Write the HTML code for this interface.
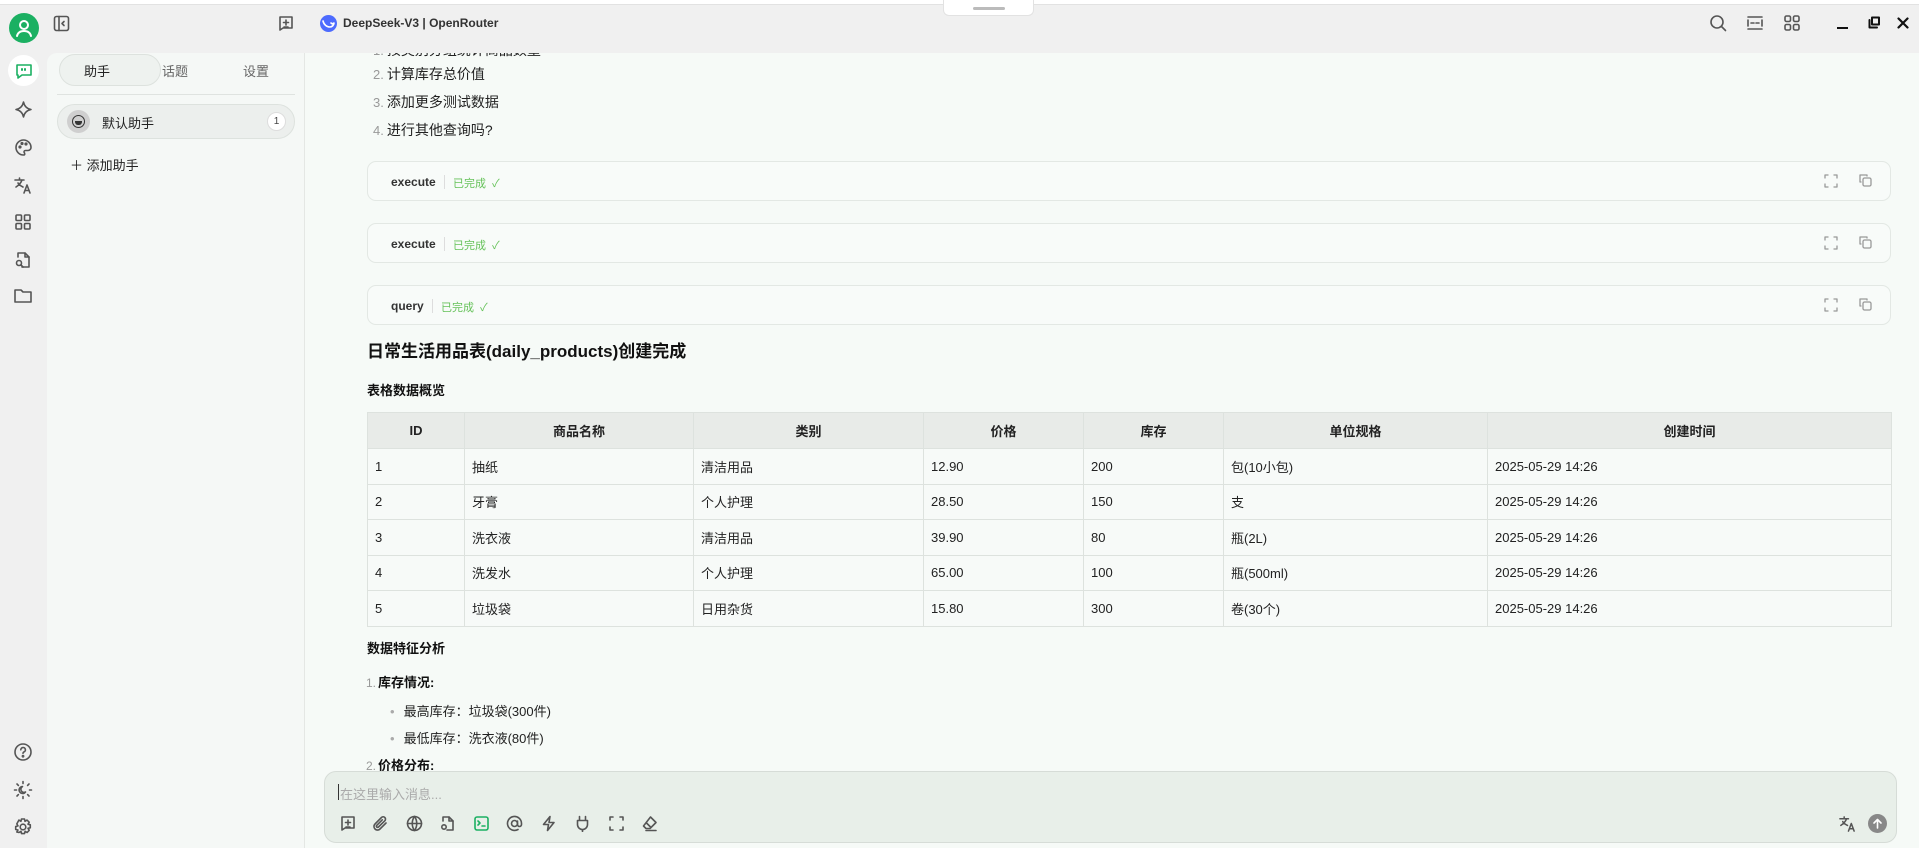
<!DOCTYPE html>
<html><head><meta charset="utf-8">
<style>
*{box-sizing:border-box;margin:0;padding:0}
body{width:1919px;height:848px;overflow:hidden;background:#f0f0f0;font-family:"Liberation Sans","Noto Sans CJK SC",sans-serif;color:#222;position:relative}
.abs{position:absolute}
svg{position:absolute;fill:none;stroke:#555;stroke-width:1.6;stroke-linecap:round;stroke-linejoin:round}
.side{left:47px;top:53px;width:258px;height:795px;background:#f5f8f6;border-top-left-radius:10px;border-right:1px solid #e4e7e4}
.main{left:305px;top:53px;width:1614px;height:795px;background:#f6faf7;overflow:hidden}
.li{position:absolute;left:373px;font-size:14px;color:#222}
.li b{color:#999;font-weight:normal;margin-right:3px;font-size:13px}
.card{position:absolute;left:367px;width:1524px;height:40px;border:1px solid #e3e8e4;border-radius:9px;background:#f8fbf9}
.card .n{position:absolute;left:23px;top:13px;font-size:12px;font-weight:bold;color:#333;padding-right:8px;border-right:1px solid #ddd}
.card .s{position:absolute;top:13px;font-size:11px;color:#66c25a}
table{position:absolute;left:367px;top:412px;border-collapse:collapse;font-size:13px}
td,th{border:1px solid #dde2de;padding:0 7px;height:35.5px;text-align:left;font-weight:normal;color:#222}
th{background:#e8ebe8;text-align:center;font-weight:bold;height:36px}
td{background:#f7faf8}
</style></head><body>
<div class="abs" style="left:0;top:0;width:1919px;height:5px;background:#fff;border-bottom:1px solid #e2e2e2"></div>
<div class="abs" style="left:943px;top:0;width:91px;height:16px;background:#fff;border:1px solid #e2e2e2;border-top:none;border-radius:0 0 6px 6px"></div>
<div class="abs" style="left:973px;top:7px;width:32px;height:3px;background:#bbb;border-radius:2px"></div>

<!-- rail -->
<div class="abs" style="left:9px;top:13px;width:30px;height:30px;border-radius:50%;background:#1bb062"></div>
<svg style="left:14px;top:17px" width="20" height="22" viewBox="0 0 20 22"><circle cx="10" cy="8" r="4" stroke="#fff" stroke-width="2"/><path d="M3 19c1-4 4-5 7-5s6 1 7 5" stroke="#fff" stroke-width="2"/></svg>
<div class="abs" style="left:8px;top:55px;width:31px;height:31px;border-radius:50%;background:#fff"></div>
<svg style="left:15px;top:62px" width="18" height="18" viewBox="0 0 18 18"><path d="M2 3h14v10H7l-4 3v-3H2z" stroke="#1bb062"/><path d="M7 7v1M10 7v1" stroke="#1bb062" stroke-width="2"/></svg>
<svg style="left:14px;top:100px" width="19" height="19" viewBox="0 0 19 19"><path d="M9.5 2c.8 4 3.5 6.7 7.5 7.5-4 .8-6.7 3.5-7.5 7.5-.8-4-3.5-6.7-7.5-7.5 4-.8 6.7-3.5 7.5-7.5z"/></svg>
<svg style="left:14px;top:138px" width="19" height="19" viewBox="0 0 19 19"><path d="M9.5 2a7.5 7.5 0 0 0 0 15c1.5 0 1.5-1.5.8-2.3-.8-1 0-2.2 1.2-2.2H14a3 3 0 0 0 3-3A7.5 7.5 0 0 0 9.5 2z"/><circle cx="6" cy="9" r=".8"/><circle cx="8" cy="5.5" r=".8"/><circle cx="12" cy="6" r=".8"/></svg>
<svg style="left:13px;top:175px" width="20" height="20" viewBox="0 0 20 20"><path d="M2 5h9M6.5 3v2M3 12c3-2 5-4 6-7M5 8c1 2 3 3 5 4M11 18l3-8 3 8M12 15.5h4"/></svg>
<svg style="left:14px;top:213px" width="18" height="18" viewBox="0 0 18 18"><rect x="2" y="2" width="5.5" height="5.5" rx="1"/><rect x="10.5" y="2" width="5.5" height="5.5" rx="1"/><rect x="2" y="10.5" width="5.5" height="5.5" rx="1"/><rect x="10.5" y="10.5" width="5.5" height="5.5" rx="1"/></svg>
<svg style="left:14px;top:250px" width="18" height="19" viewBox="0 0 18 19"><path d="M4 7V3h7l4 4v10H8"/><path d="M11 3v4h4"/><circle cx="5" cy="13" r="2.5"/><path d="M7 15l2 2"/></svg>
<svg style="left:13px;top:287px" width="20" height="18" viewBox="0 0 20 18"><path d="M2 3h6l2 2h8v10H2z"/></svg>
<svg style="left:13px;top:742px" width="20" height="20" viewBox="0 0 20 20"><circle cx="10" cy="10" r="8"/><path d="M7.8 7.8a2.3 2.3 0 1 1 3 2.2c-.6.3-.8.7-.8 1.3"/><circle cx="10" cy="14.2" r=".6"/></svg>
<svg style="left:13px;top:780px" width="20" height="20" viewBox="0 0 20 20"><path d="M10 1.5v2M10 16.5v2M1.5 10h2M16.5 10h2M4 4l1.4 1.4M14.6 14.6L16 16M4 16l1.4-1.4M14.6 5.4L16 4"/><path d="M12.5 12a3.5 3.5 0 1 1-3-5.5 2.8 2.8 0 0 0 3 5.5z"/></svg>
<svg style="left:13px;top:817px" width="20" height="20" viewBox="0 0 20 20"><circle cx="10" cy="10" r="2.8"/><path d="M8.5 2h3l.5 2.3 2-1.2 2.2 2.1-1.2 2 2.3.6v3l-2.3.5 1.2 2-2.1 2.2-2-1.2-.6 2.3h-3l-.5-2.3-2 1.2L3.8 15l1.2-2-2.3-.5v-3l2.3-.6-1.2-2L5.9 3.1l2 1.2z"/></svg>

<!-- top bar -->
<svg style="left:53px;top:15px" width="17" height="17" viewBox="0 0 17 17"><rect x="1.5" y="1.5" width="14" height="14" rx="2"/><path d="M6 1.5v14M11 6.5L9 8.5l2 2"/></svg>
<svg style="left:277px;top:15px" width="17" height="17" viewBox="0 0 17 17"><path d="M3 15V2h12v11H6z"/><path d="M9 5v5M6.5 7.5h5M7 12h4"/></svg>
<div class="abs" style="left:320px;top:15px;width:17px;height:17px;border-radius:50%;background:#4d6bfe"></div>
<svg style="left:322px;top:18px" width="13" height="11" viewBox="0 0 13 11"><path d="M1 3c1 4 4 6 7 6 2 0 4-2 4-4-1 1-2 1-3 0" stroke="#fff" stroke-width="1.6"/></svg>
<div class="abs" style="left:343px;top:16px;font-size:12px;font-weight:bold;color:#333">DeepSeek-V3 | OpenRouter</div>
<svg style="left:1709px;top:14px" width="18" height="18" viewBox="0 0 18 18"><circle cx="8" cy="8" r="6"/><path d="M12.5 12.5l4 4"/></svg>
<svg style="left:1746px;top:14px" width="18" height="18" viewBox="0 0 18 18"><path d="M2 3h14M2 15h14M2 6v6M16 6v6M5 9h3M10 9h3"/></svg>
<svg style="left:1783px;top:14px" width="18" height="18" viewBox="0 0 18 18"><rect x="2" y="2" width="5.5" height="5.5" rx="1.5"/><rect x="10.5" y="2" width="5.5" height="5.5" rx="1.5"/><rect x="2" y="10.5" width="5.5" height="5.5" rx="1.5"/><rect x="10.5" y="10.5" width="5.5" height="5.5" rx="1.5"/></svg>
<div class="abs" style="left:1837px;top:27px;width:11px;height:2px;background:#111"></div>
<svg style="left:1868px;top:16px;stroke:#111;stroke-width:2" width="13" height="13" viewBox="0 0 13 13"><rect x="4" y="1.5" width="7" height="7"/><path d="M1.5 4v7.5H9"/></svg>
<svg style="left:1897px;top:17px;stroke:#111;stroke-width:2.2" width="12" height="12" viewBox="0 0 12 12"><path d="M1.5 1.5l9 9M10.5 1.5l-9 9"/></svg>

<!-- sidebar -->
<div class="abs side"></div>
<div class="abs" style="left:59px;top:54px;width:102px;height:32px;border:1px solid #dde2de;border-radius:16px;background:#eef2ef"></div>
<div class="abs" style="left:84px;top:61px;font-size:13px;color:#222">助手</div>
<div class="abs" style="left:162px;top:61px;font-size:13px;color:#666">话题</div>
<div class="abs" style="left:243px;top:61px;font-size:13px;color:#666">设置</div>
<div class="abs" style="left:57px;top:94px;width:238px;height:1px;background:#dfe3e0"></div>
<div class="abs" style="left:57px;top:104px;width:238px;height:35px;border:1px solid #dde2de;border-radius:18px;background:#ecefed"></div>
<div class="abs" style="left:67px;top:110px;width:23px;height:23px;border-radius:50%;background:#cfcfcf"></div>
<div class="abs" style="left:72px;top:115px;width:13px;height:13px;border-radius:50%;border:1.5px solid #333"></div>
<div class="abs" style="left:75px;top:121px;width:7px;height:4px;background:#333;border-radius:0 0 3px 3px"></div>
<div class="abs" style="left:102px;top:113px;font-size:13px;color:#222">默认助手</div>
<div class="abs" style="left:267px;top:112px;width:19px;height:19px;border-radius:50%;background:#fff;border:1px solid #ddd;font-size:10px;text-align:center;line-height:17px;color:#444">1</div>
<div class="abs" style="left:70px;top:155px;font-size:13px;color:#222">＋ 添加助手</div>

<!-- main -->
<div class="abs main"></div>
<div class="li" style="top:40px;clip-path:inset(13px 0 0 0)"><b>1.</b>按类别分组统计商品数量</div>
<div class="li" style="top:64px"><b>2.</b>计算库存总价值</div>
<div class="li" style="top:92px"><b>3.</b>添加更多测试数据</div>
<div class="li" style="top:120px"><b>4.</b>进行其他查询吗?</div>

<div class="card" style="top:161px"><span class="n">execute</span><span class="s" style="left:85px">已完成 &nbsp;✓</span></div>
<div class="card" style="top:223px"><span class="n">execute</span><span class="s" style="left:85px">已完成 &nbsp;✓</span></div>
<div class="card" style="top:285px"><span class="n">query</span><span class="s" style="left:73px">已完成 &nbsp;✓</span></div>
<svg style="left:1824px;top:174px;stroke:#999;stroke-width:1.3" width="14" height="14" viewBox="0 0 14 14"><path d="M1 4V1h3M10 1h3v3M13 10v3h-3M4 13H1v-3"/></svg>
<svg style="left:1858px;top:173px;stroke:#999;stroke-width:1.3" width="14" height="14" viewBox="0 0 14 14"><rect x="5" y="5" width="8" height="8" rx="1.5"/><path d="M3 9H2V2h7v1"/></svg>
<svg style="left:1824px;top:236px;stroke:#999;stroke-width:1.3" width="14" height="14" viewBox="0 0 14 14"><path d="M1 4V1h3M10 1h3v3M13 10v3h-3M4 13H1v-3"/></svg>
<svg style="left:1858px;top:235px;stroke:#999;stroke-width:1.3" width="14" height="14" viewBox="0 0 14 14"><rect x="5" y="5" width="8" height="8" rx="1.5"/><path d="M3 9H2V2h7v1"/></svg>
<svg style="left:1824px;top:298px;stroke:#999;stroke-width:1.3" width="14" height="14" viewBox="0 0 14 14"><path d="M1 4V1h3M10 1h3v3M13 10v3h-3M4 13H1v-3"/></svg>
<svg style="left:1858px;top:297px;stroke:#999;stroke-width:1.3" width="14" height="14" viewBox="0 0 14 14"><rect x="5" y="5" width="8" height="8" rx="1.5"/><path d="M3 9H2V2h7v1"/></svg>

<div class="abs" style="left:367px;top:337px;font-size:17px;font-weight:bold;color:#111">日常生活用品表(daily_products)创建完成</div>
<div class="abs" style="left:367px;top:380px;font-size:13px;font-weight:bold;color:#111">表格数据概览</div>

<table>
<tr><th style="width:97px">ID</th><th style="width:229px">商品名称</th><th style="width:230px">类别</th><th style="width:160px">价格</th><th style="width:140px">库存</th><th style="width:264px">单位规格</th><th style="width:404px">创建时间</th></tr>
<tr><td>1</td><td>抽纸</td><td>清洁用品</td><td>12.90</td><td>200</td><td>包(10小包)</td><td>2025-05-29 14:26</td></tr>
<tr><td>2</td><td>牙膏</td><td>个人护理</td><td>28.50</td><td>150</td><td>支</td><td>2025-05-29 14:26</td></tr>
<tr><td>3</td><td>洗衣液</td><td>清洁用品</td><td>39.90</td><td>80</td><td>瓶(2L)</td><td>2025-05-29 14:26</td></tr>
<tr><td>4</td><td>洗发水</td><td>个人护理</td><td>65.00</td><td>100</td><td>瓶(500ml)</td><td>2025-05-29 14:26</td></tr>
<tr><td>5</td><td>垃圾袋</td><td>日用杂货</td><td>15.80</td><td>300</td><td>卷(30个)</td><td>2025-05-29 14:26</td></tr>
</table>

<div class="abs" style="left:367px;top:638px;font-size:13px;font-weight:bold;color:#111">数据特征分析</div>
<div class="abs" style="left:366px;top:672px;font-size:13px;color:#111"><span style="color:#999;font-size:12px;margin-right:2px">1.</span><b>库存情况:</b></div>
<div class="abs" style="left:390px;top:701px;font-size:13px;color:#222"><span style="color:#aaa;margin-right:9px">•</span>最高库存：垃圾袋(300件)</div>
<div class="abs" style="left:390px;top:728px;font-size:13px;color:#222"><span style="color:#aaa;margin-right:9px">•</span>最低库存：洗衣液(80件)</div>
<div class="abs" style="left:366px;top:755px;font-size:13px;color:#111"><span style="color:#999;font-size:12px;margin-right:2px">2.</span><b>价格分布:</b></div>

<!-- input -->
<div class="abs" style="left:324px;top:771px;width:1573px;height:72px;background:#e8efe9;border:1px solid #d6dcd7;border-radius:12px"></div>
<div class="abs" style="left:338px;top:784px;width:1px;height:16px;background:#333"></div>
<div class="abs" style="left:340px;top:784px;font-size:13px;color:#aaa">在这里输入消息...</div>
<svg style="left:339px;top:815px" width="17" height="17" viewBox="0 0 17 17"><path d="M3 15V2h12v11H6z"/><path d="M9 5v5M6.5 7.5h5M7 12h4"/></svg>
<svg style="left:372px;top:815px" width="17" height="17" viewBox="0 0 17 17"><path d="M14 8l-6 6a3.5 3.5 0 0 1-5-5l6.5-6.5a2.3 2.3 0 0 1 3.3 3.3L6.5 12a1.2 1.2 0 0 1-1.7-1.7l5.5-5.5"/></svg>
<svg style="left:406px;top:815px" width="17" height="17" viewBox="0 0 17 17"><circle cx="8.5" cy="8.5" r="7"/><path d="M1.5 8.5h14M8.5 1.5c-3 4-3 10 0 14M8.5 1.5c3 4 3 10 0 14"/></svg>
<svg style="left:439px;top:815px" width="17" height="17" viewBox="0 0 17 17"><path d="M4 6V2h6l4 4v9H8"/><path d="M10 2v4h4"/><circle cx="5" cy="12" r="2.2"/></svg>
<svg style="left:473px;top:815px;stroke:#1bb062" width="17" height="17" viewBox="0 0 17 17"><rect x="2" y="2" width="13" height="13" rx="2"/><path d="M5 6l2 2-2 2M9 11h3"/></svg>
<svg style="left:506px;top:815px" width="17" height="17" viewBox="0 0 17 17"><circle cx="8.5" cy="8.5" r="3"/><path d="M11.5 6v3.5a2 2 0 0 0 4 0v-1A7 7 0 1 0 12 14.5"/></svg>
<svg style="left:540px;top:815px" width="17" height="17" viewBox="0 0 17 17"><path d="M10 1.5L3.5 9.5h5l-1 6 6.5-8h-5z"/></svg>
<svg style="left:574px;top:815px" width="17" height="17" viewBox="0 0 17 17"><path d="M5.5 1.5v4M11.5 1.5v4M3.5 5.5h10v4a5 5 0 0 1-10 0zM8.5 14.5v2"/></svg>
<svg style="left:608px;top:815px" width="17" height="17" viewBox="0 0 17 17"><path d="M2 5V2h3M12 2h3v3M15 12v3h-3M5 15H2v-3"/></svg>
<svg style="left:641px;top:815px" width="17" height="17" viewBox="0 0 17 17"><path d="M9.5 2l5.5 5.5-6 6H5L2.5 11z M5.5 8l4.5 4.5M5 15.5h10"/></svg>
<svg style="left:1838px;top:814px" width="19" height="19" viewBox="0 0 20 20"><path d="M2 5h9M6.5 3v2M3 12c3-2 5-4 6-7M5 8c1 2 3 3 5 4M11 18l3-8 3 8M12 15.5h4"/></svg>
<div class="abs" style="left:1868px;top:814px;width:19px;height:19px;border-radius:50%;background:#888"></div>
<svg style="left:1871px;top:817px;stroke:#fff;stroke-width:1.6" width="13" height="13" viewBox="0 0 13 13"><path d="M6.5 11V2.5M3 6l3.5-3.5L10 6"/></svg>
</body></html>
